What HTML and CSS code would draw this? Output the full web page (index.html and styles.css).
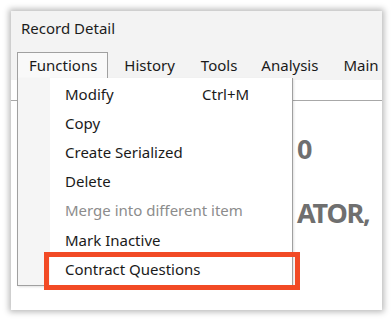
FILE: index.html
```html
<!DOCTYPE html>
<html>
<head>
<meta charset="utf-8">
<link rel="stylesheet" href="styles.css">
</head>
<body>
<div class="window">
  <div class="titlebar">Record Detail</div>
  <div class="menubar">
    <div class="menu-item active">Functions</div>
    <div class="menu-item">History</div>
    <div class="menu-item">Tools</div>
    <div class="menu-item">Analysis</div>
    <div class="menu-item">Main</div>
  </div>
  <div class="toolbar"></div>
  <div class="content">
    <div class="hero-line first">0</div>
    <div class="hero-line">ATOR,</div>
  </div>
  <div class="dropdown">
    <div class="dd-item"><span class="label">Modify</span><span class="shortcut">Ctrl+M</span></div>
    <div class="dd-item"><span class="label">Copy</span></div>
    <div class="dd-item"><span class="label">Create Serialized</span></div>
    <div class="dd-item"><span class="label">Delete</span></div>
    <div class="dd-item disabled"><span class="label">Merge into different item</span></div>
    <div class="dd-item"><span class="label">Mark Inactive</span></div>
    <div class="dd-item"><span class="label">Contract Questions</span></div>
  </div>
  <div class="highlight"></div>
</div>
</body>
</html>
```
FILE: styles.css
```css
html, body {
  margin: 0;
  padding: 0;
  background: #ffffff;
}
body {
  width: 392px;
  height: 322px;
  overflow: hidden;
  font-family: "Noto Sans", "Open Sans", sans-serif;
  color: #1a1a1a;
}
.window {
  position: relative;
  margin: 11px 0 0 11px;
  width: 371px;
  height: 299px;
  background: #ffffff;
  box-shadow: 0 0 6px 2px rgba(0,0,0,0.28);
  overflow: hidden;
}
.titlebar {
  height: 40px;
  background: #f3f3f3;
  padding-left: 10px;
  font-size: 15px;
  line-height: 35px;
  color: #1c1c1c;
}
.menubar {
  display: flex;
  height: 29px;
  background: #f3f3f3;
  padding-left: 6px;
  font-size: 15px;
}
.menu-item {
  padding: 0 10px 0 12px;
  line-height: 24px;
  margin-top: 1px;
  border: 1px solid transparent;
  border-bottom: none;
}
.menu-item.active {
  border-color: #a0a0a0;
  background: #f9f9f9;
  padding: 0 10px 0 11px;
}
.menu-item:nth-child(2) { margin-left: 3px; }
.menu-item:nth-child(3) { margin-left: 2px; }
.menu-item:nth-child(4) { margin-left: 0px; }
.menu-item:nth-child(5) { margin-left: 1px; }
.toolbar {
  height: 20px;
  border-bottom: 1px solid #a8a8a8;
}
.content {
  padding: 31px 0 0 286px;
}
.hero-line {
  font-size: 27px;
  font-weight: 700;
  letter-spacing: -1.2px;
  color: #6f6f6f;
  line-height: 34px;
  white-space: nowrap;
  margin-bottom: 30px;
}
.dropdown {
  position: absolute;
  left: 6px;
  top: 67px;
  width: 276px;
  height: 208px;
  border: 1px solid #a0a0a0;
  border-top: none;
  background: linear-gradient(to right, #f5f5f5 0, #f5f5f5 32px, #ffffff 32px);
  padding-top: 1px;
  box-sizing: border-box;
  box-shadow: 1px 1px 2px rgba(0,0,0,0.12);
}
.dd-item {
  display: flex;
  height: 29.2px;
  align-items: center;
  font-size: 15px;
  padding-left: 47px;
  color: #1a1a1a;
  white-space: nowrap;
}
.dd-item .label {
  width: 137px;
}
.dd-item.disabled {
  color: #8c8c8c;
}
.highlight {
  position: absolute;
  left: 33px;
  top: 241px;
  width: 256px;
  height: 38px;
  border: 5px solid #f24a25;
  box-sizing: border-box;
}
```
